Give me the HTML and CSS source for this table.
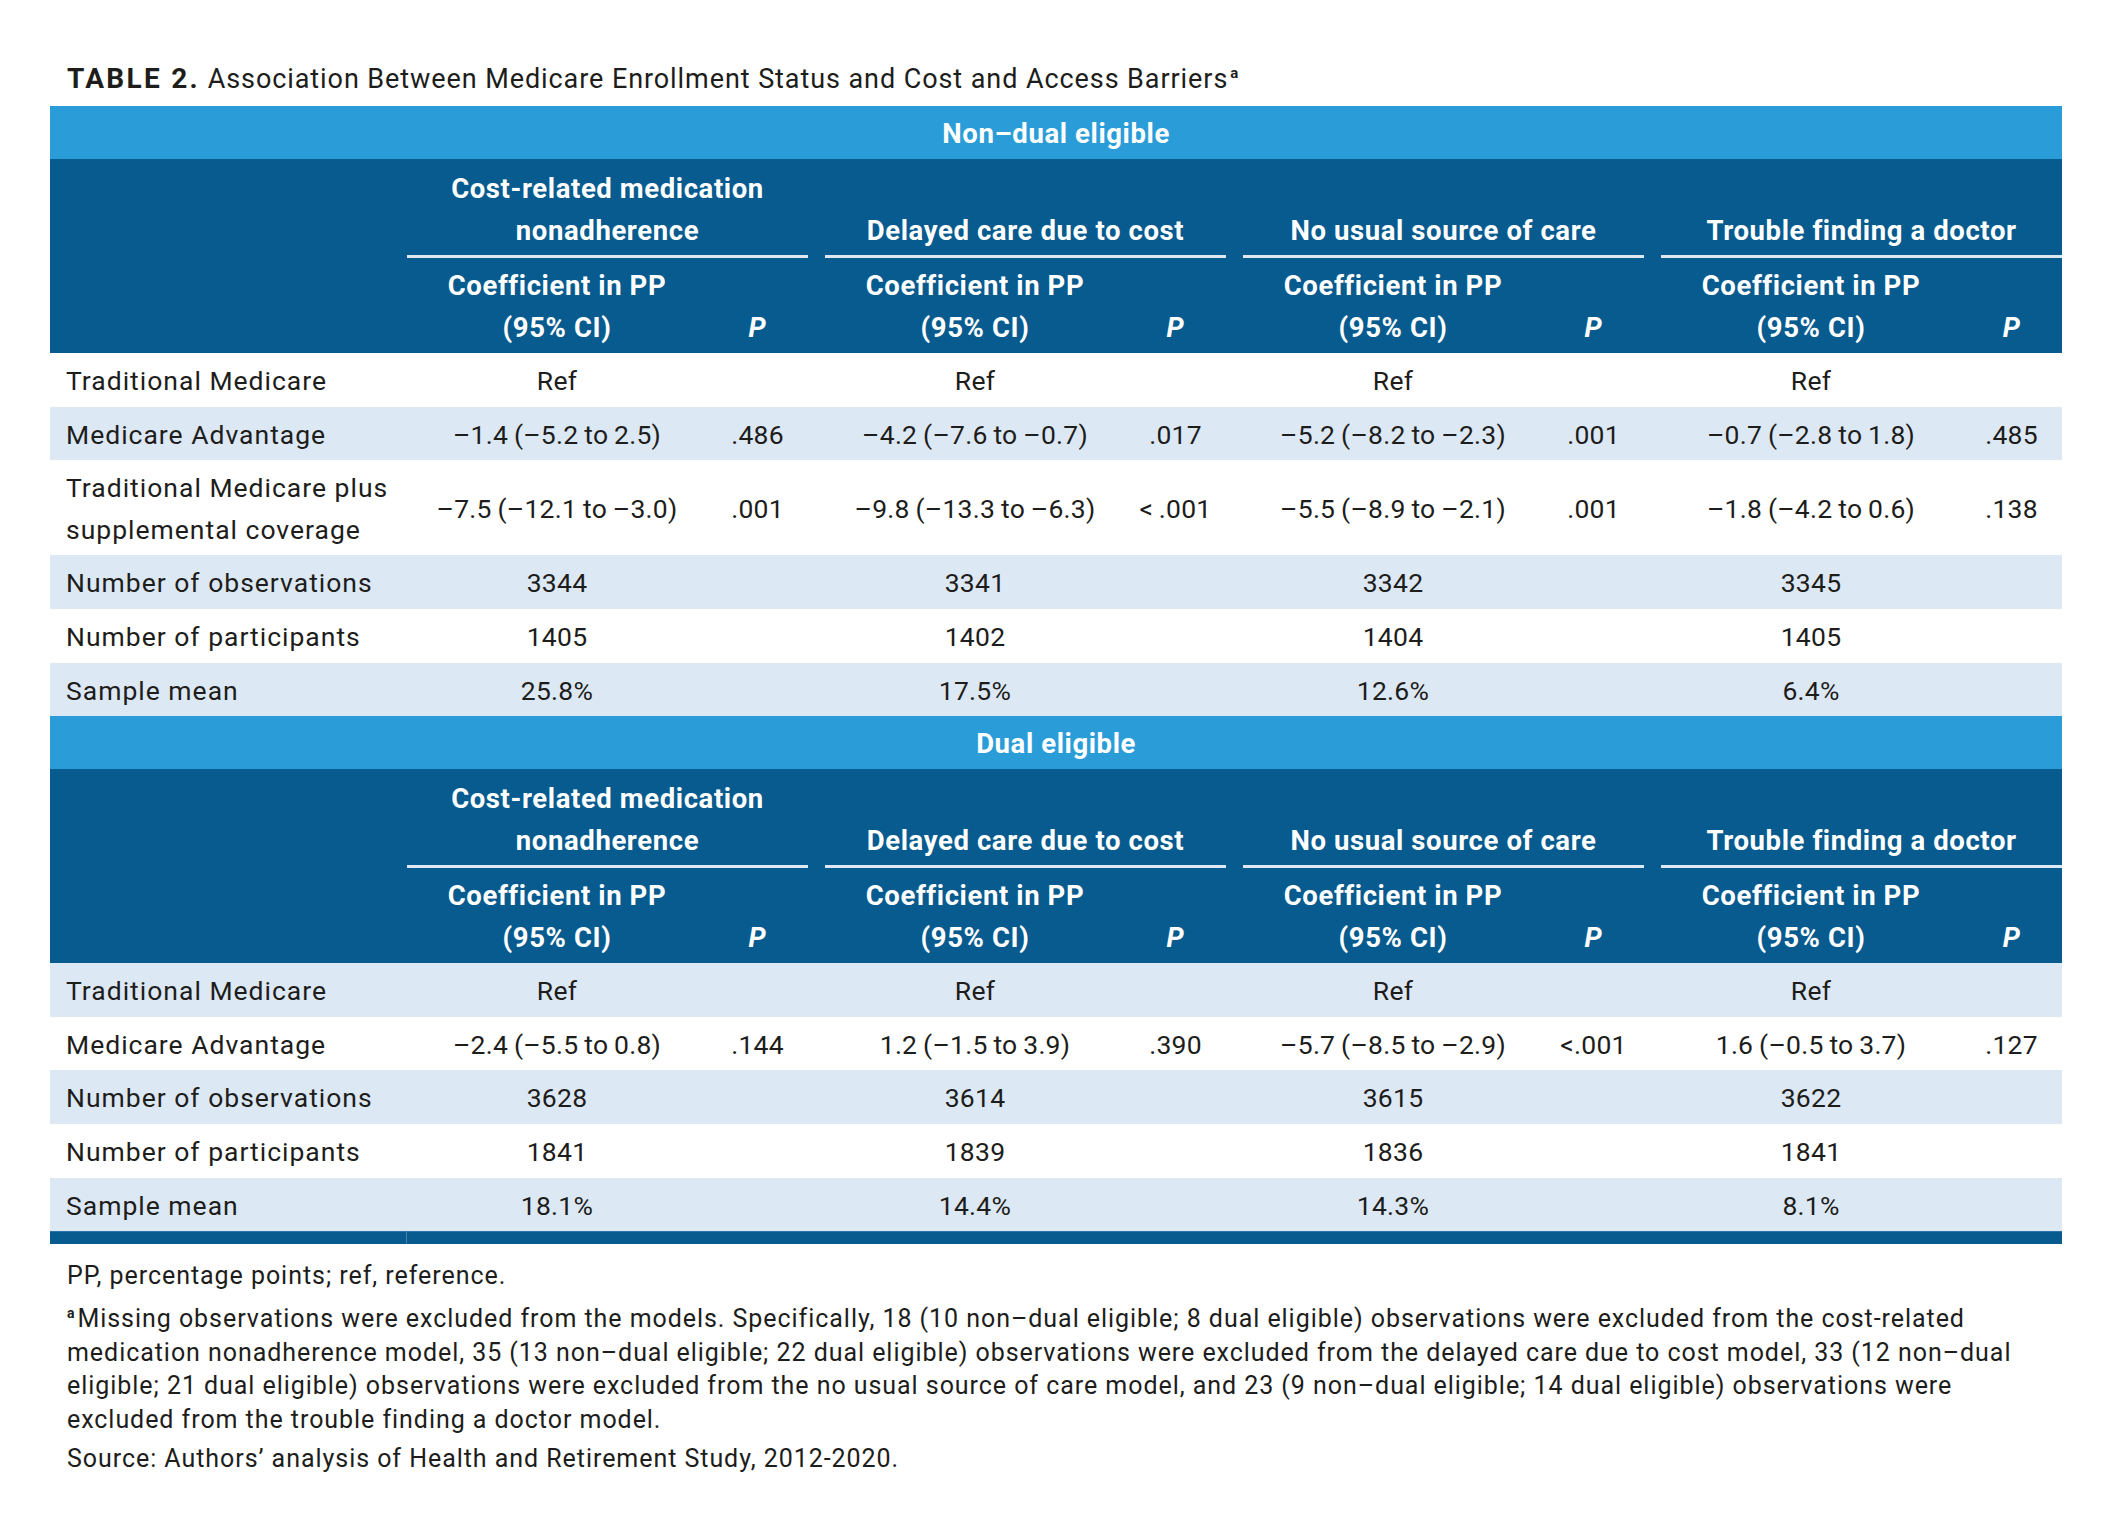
FILE: index.html
```html
<!DOCTYPE html>
<html lang="en">
<head>
<meta charset="utf-8">
<title>Table 2</title>
<link rel="stylesheet" href="styles.css">
</head>
<body>
<div class="page">
  <h1 class="title"><b>TABLE 2.</b> Association Between Medicare Enrollment Status and Cost and Access Barriers<span class="sup">a</span></h1>
  <table class="tbl">
    <colgroup>
      <col class="c-lbl"><col class="c-coef"><col class="c-p"><col class="c-gap"><col class="c-coef"><col class="c-p"><col class="c-gap"><col class="c-coef"><col class="c-p"><col class="c-gap"><col class="c-coef"><col class="c-p">
    </colgroup>
    <tbody>
      <tr class="band"><td colspan="12">Non–dual eligible</td></tr>
      <tr class="hd hd1">
        <td rowspan="2"></td>
        <td colspan="2" class="grp">Cost-related medication<br>nonadherence</td><td></td>
        <td colspan="2" class="grp">Delayed care due to cost</td><td></td>
        <td colspan="2" class="grp">No usual source of care</td><td></td>
        <td colspan="2" class="grp">Trouble finding a doctor</td>
      </tr>
      <tr class="hd hd2">
        <td>Coefficient in PP<br>(95% CI)</td><td class="p">P</td><td></td>
        <td>Coefficient in PP<br>(95% CI)</td><td class="p">P</td><td></td>
        <td>Coefficient in PP<br>(95% CI)</td><td class="p">P</td><td></td>
        <td>Coefficient in PP<br>(95% CI)</td><td class="p">P</td>
      </tr>
      <tr class="row">
        <td class="lbl">Traditional Medicare</td>
        <td>Ref</td><td></td><td></td><td>Ref</td><td></td><td></td><td>Ref</td><td></td><td></td><td>Ref</td><td></td>
      </tr>
      <tr class="row alt">
        <td class="lbl">Medicare Advantage</td>
        <td>–1.4 (–5.2 to 2.5)</td><td>.486</td><td></td><td>–4.2 (–7.6 to –0.7)</td><td>.017</td><td></td><td>–5.2 (–8.2 to –2.3)</td><td>.001</td><td></td><td>–0.7 (–2.8 to 1.8)</td><td>.485</td>
      </tr>
      <tr class="row">
        <td class="lbl">Traditional Medicare plus supplemental coverage</td>
        <td>–7.5 (–12.1 to –3.0)</td><td>.001</td><td></td><td>–9.8 (–13.3 to –6.3)</td><td>&lt;&#8201;.001</td><td></td><td>–5.5 (–8.9 to –2.1)</td><td>.001</td><td></td><td>–1.8 (–4.2 to 0.6)</td><td>.138</td>
      </tr>
      <tr class="row alt">
        <td class="lbl">Number of observations</td>
        <td>3344</td><td></td><td></td><td>3341</td><td></td><td></td><td>3342</td><td></td><td></td><td>3345</td><td></td>
      </tr>
      <tr class="row">
        <td class="lbl">Number of participants</td>
        <td>1405</td><td></td><td></td><td>1402</td><td></td><td></td><td>1404</td><td></td><td></td><td>1405</td><td></td>
      </tr>
      <tr class="row alt">
        <td class="lbl">Sample mean</td>
        <td>25.8%</td><td></td><td></td><td>17.5%</td><td></td><td></td><td>12.6%</td><td></td><td></td><td>6.4%</td><td></td>
      </tr>

      <tr class="band"><td colspan="12">Dual eligible</td></tr>
      <tr class="hd hd1">
        <td rowspan="2"></td>
        <td colspan="2" class="grp">Cost-related medication<br>nonadherence</td><td></td>
        <td colspan="2" class="grp">Delayed care due to cost</td><td></td>
        <td colspan="2" class="grp">No usual source of care</td><td></td>
        <td colspan="2" class="grp">Trouble finding a doctor</td>
      </tr>
      <tr class="hd hd2">
        <td>Coefficient in PP<br>(95% CI)</td><td class="p">P</td><td></td>
        <td>Coefficient in PP<br>(95% CI)</td><td class="p">P</td><td></td>
        <td>Coefficient in PP<br>(95% CI)</td><td class="p">P</td><td></td>
        <td>Coefficient in PP<br>(95% CI)</td><td class="p">P</td>
      </tr>
      <tr class="row alt">
        <td class="lbl">Traditional Medicare</td>
        <td>Ref</td><td></td><td></td><td>Ref</td><td></td><td></td><td>Ref</td><td></td><td></td><td>Ref</td><td></td>
      </tr>
      <tr class="row">
        <td class="lbl">Medicare Advantage</td>
        <td>–2.4 (–5.5 to 0.8)</td><td>.144</td><td></td><td>1.2 (–1.5 to 3.9)</td><td>.390</td><td></td><td>–5.7 (–8.5 to –2.9)</td><td>&lt;.001</td><td></td><td>1.6 (–0.5 to 3.7)</td><td>.127</td>
      </tr>
      <tr class="row alt">
        <td class="lbl">Number of observations</td>
        <td>3628</td><td></td><td></td><td>3614</td><td></td><td></td><td>3615</td><td></td><td></td><td>3622</td><td></td>
      </tr>
      <tr class="row">
        <td class="lbl">Number of participants</td>
        <td>1841</td><td></td><td></td><td>1839</td><td></td><td></td><td>1836</td><td></td><td></td><td>1841</td><td></td>
      </tr>
      <tr class="row alt">
        <td class="lbl">Sample mean</td>
        <td>18.1%</td><td></td><td></td><td>14.4%</td><td></td><td></td><td>14.3%</td><td></td><td></td><td>8.1%</td><td></td>
      </tr>
      <tr class="endbar"><td class="end-lbl"></td><td colspan="11"></td></tr>
    </tbody>
  </table>
  <div class="notes">
    <p class="n-first">PP, percentage points; ref, reference.</p>
    <p><span class="fsup">a</span>Missing observations were excluded from the models. Specifically, 18 (10 non–dual eligible; 8 dual eligible) observations were excluded from the cost-related medication nonadherence model, 35 (13 non–dual eligible; 22 dual eligible) observations were excluded from the delayed care due to cost model, 33 (12 non–dual eligible; 21 dual eligible) observations were excluded from the no usual source of care model, and 23 (9 non–dual eligible; 14 dual eligible) observations were excluded from the trouble finding a doctor model.</p>
    <p>Source: Authors’ analysis of Health and Retirement Study, 2012-2020.</p>
  </div>
</div>
</body>
</html>
```

FILE: styles.css
```css
html, body {
  margin: 0;
  padding: 0;
  background: #ffffff;
}

body {
  font-family: Roboto, "Liberation Sans", Arial, sans-serif;
  color: #1d1d1b;
}

.page {
  padding: 62px 0 40px 50px;
}

.title {
  margin: 0 0 10px 17px;
  font-size: 27px;
  line-height: 34px;
  font-weight: 400;
  letter-spacing: 0.92px;
}

.title b {
  font-weight: 700;
  font-size: 28px;
  letter-spacing: 2.3px;
}

.title .sup {
  display: inline-block;
  font-size: 15px;
  line-height: 15px;
  vertical-align: 10px;
  font-weight: 700;
  margin-left: 2px;
}

.tbl {
  border-collapse: separate;
  border-spacing: 0;
  table-layout: fixed;
  width: 2012px;
}

.c-lbl { width: 357px; }
.c-coef { width: 300px; }
.c-p { width: 101px; }
.c-gap { width: 17px; }

.tbl td {
  padding: 0;
}

.band td {
  background: #2a9dd9;
  color: #ffffff;
  font-weight: 700;
  font-size: 27.5px;
  letter-spacing: 0.6px;
  text-align: center;
  height: 51px;
  padding-top: 2px;
  line-height: 51px;
}

.hd td {
  background: #075b8e;
  color: #ffffff;
  font-weight: 700;
  font-size: 27.5px;
  letter-spacing: 0.6px;
  line-height: 42px;
  text-align: center;
  vertical-align: bottom;
}

.hd1 td {
  padding: 9px 0 3px;
}

.hd1 td.grp {
  border-bottom: 3px solid #dce8f2;
}

.hd2 td {
  padding: 7px 0 4px;
}

.hd td.p {
  font-style: italic;
}

.row td {
  padding: 7px 0 5px;
  font-size: 26.5px;
  line-height: 41.6px;
  letter-spacing: 0.25px;
  word-spacing: -1px;
  text-align: center;
  vertical-align: middle;
  background: #ffffff;
}

.row.alt td {
  background: #dde8f5;
}

.row td.lbl {
  text-align: left;
  padding-left: 16px;
  letter-spacing: 1px;
  word-spacing: 0;
}

.endbar td {
  background: #085b8e;
  height: 12px;
  border-top: 1px solid #2c72a6;
}

.endbar td.end-lbl {
  border-right: 1px solid #3f82b2;
}

.notes {
  width: 1983px;
  padding: 15px 0 0 17px;
  font-size: 25px;
  line-height: 33.7px;
  letter-spacing: 0.95px;
}

.notes p {
  margin: 0 0 5px;
}

.notes p.n-first {
  margin-bottom: 9px;
}

.fsup {
  display: inline-block;
  font-size: 14px;
  font-weight: 700;
  line-height: 14px;
  vertical-align: 9px;
  margin-right: 2px;
}
```
